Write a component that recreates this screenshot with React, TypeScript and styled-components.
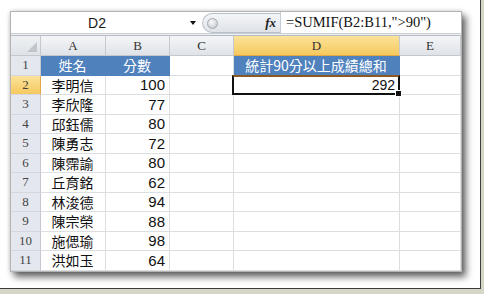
import React from "react";
import styled, { createGlobalStyle, css } from "styled-components";

const GlobalStyle = createGlobalStyle`
  html, body {
    margin: 0;
    padding: 0;
    background: #d6d6c8;
  }
`;

const CJK = `"Noto Sans CJK TC", "Noto Sans", sans-serif`;
const SERIF = `"Liberation Serif", "DejaVu Serif", serif`;
const SANS = `"Liberation Sans", Arial, sans-serif`;

const Page = styled.div`
  width: 481px;
  height: 289px;
  background: #ffffff;
  border-right: 1px solid #3e3e3a;
  border-bottom: 1px solid #3e3e3a;
  padding: 11px 0 0 10px;
  box-sizing: border-box;
  overflow: hidden;
`;

const Sheet = styled.div`
  width: 452px;
  background: #ffffff;
  border: 1px solid #b4b4b4;
  box-sizing: border-box;
  box-shadow: 4px 5px 7px rgba(0, 0, 0, 0.6), 0 0 4px rgba(0, 0, 0, 0.18);
`;

const FormulaBar = styled.div`
  display: flex;
  height: 21px;
  align-items: stretch;
`;

const NameBox = styled.div`
  width: 176px;
  display: flex;
  align-items: center;
  justify-content: center;
  padding-right: 4px;
  box-sizing: border-box;
  font-family: ${SANS};
  font-size: 14px;
  color: #1a1a1a;
`;

const DropArrow = styled.div`
  width: 12px;
  display: flex;
  align-items: center;
  justify-content: center;
  &::after {
    content: "";
    border-left: 3px solid transparent;
    border-right: 3px solid transparent;
    border-top: 4px solid #111;
  }
`;

const Grip = styled.div`
  width: 78px;
  margin: 1px 0 0 3px;
  display: flex;
  align-items: center;
  justify-content: space-between;
  padding: 0 4px 0 2px;
  box-sizing: border-box;
  background: linear-gradient(#f3f5f8, #dfe3e8);
  border: 1px solid #b9c0c9;
  border-right: none;
  border-radius: 10px 0 0 10px;
`;

const Knob = styled.span`
  width: 9px;
  height: 9px;
  border-radius: 50%;
  background: radial-gradient(circle at 40% 35%, #fafafa, #b9bec5);
  border: 1px solid #a6acb4;
  margin-left: 2px;
`;

const FxLabel = styled.span`
  font-family: ${SERIF};
  font-style: italic;
  font-weight: bold;
  font-size: 13px;
  color: #222;
`;

const FormulaInput = styled.div`
  flex: 1;
  display: flex;
  align-items: center;
  padding-left: 5px;
  border-left: 1px solid #c6ccd3;
  font-family: ${SERIF};
  font-size: 14.5px;
  color: #111;
`;

const Separator = styled.div`
  height: 3px;
  border-top: 1px solid #c9ced5;
  border-bottom: 1px solid #b5bbc4;
  background: #eef0f3;
  box-sizing: border-box;
`;

const Grid = styled.div`
  display: grid;
  grid-template-columns: 30px 65px 64px 64px 166px 61px;
  grid-template-rows: 20px repeat(11, 19.5px);
`;

const headBase = css`
  display: flex;
  align-items: center;
  justify-content: center;
  box-sizing: border-box;
  font-family: ${SERIF};
  font-size: 13px;
  color: #333;
  border-right: 1px solid #c5c9cf;
  border-bottom: 1px solid #c5c9cf;
`;

const Corner = styled.div`
  ${headBase};
  position: relative;
  background: linear-gradient(#eef0f3, #dfe3e8);
  &::after {
    content: "";
    position: absolute;
    right: 3px;
    bottom: 3px;
    border-left: 10px solid transparent;
    border-bottom: 10px solid #c2c6cc;
  }
`;

const ColHead = styled.div<{ $active?: boolean }>`
  ${headBase};
  background: ${(p) =>
    p.$active
      ? "linear-gradient(#fbe39a, #f5c95e)"
      : "linear-gradient(#f4f5f7, #dfe3e8)"};
  border-bottom-color: ${(p) => (p.$active ? "#e2a948" : "#c5c9cf")};
`;

const RowHead = styled.div<{ $active?: boolean }>`
  ${headBase};
  background: ${(p) =>
    p.$active ? "linear-gradient(#fbe39a, #f5c95e)" : "#e4e8ee"};
  border-right-color: ${(p) => (p.$active ? "#e2a948" : "#c5c9cf")};
  border-bottom-color: #d4d8de;
  color: #444;
`;

const Cell = styled.div<{
  $fill?: boolean;
  $align?: "left" | "center" | "right";
  $num?: boolean;
  $selected?: boolean;
}>`
  position: relative;
  display: flex;
  align-items: center;
  box-sizing: border-box;
  padding: 0 4px 0 3px;
  justify-content: ${(p) =>
    p.$align === "right" ? "flex-end" : p.$align === "center" ? "center" : "flex-start"};
  font-family: ${(p) => (p.$num ? SANS : CJK)};
  font-size: ${(p) => (p.$num ? "15px" : "14px")};
  color: ${(p) => (p.$fill ? "#ffffff" : "#111111")};
  background: ${(p) => (p.$fill ? "#4f81bd" : "#ffffff")};
  border-right: 1px solid ${(p) => (p.$fill ? "#4f81bd" : "#dcdfe2")};
  border-bottom: 1px solid ${(p) => (p.$fill ? "#4f81bd" : "#dcdfe2")};
  white-space: nowrap;

  ${(p) =>
    p.$selected &&
    css`
      font-size: 14px;
      &::after {
        content: "";
        position: absolute;
        left: -2px;
        top: -1px;
        right: -1px;
        bottom: -1px;
        border: 2px solid #111;
        border-top-color: #8b5a24;
      }
      &::before {
        content: "";
        position: absolute;
        right: -3px;
        bottom: -3px;
        width: 5px;
        height: 5px;
        background: #111;
        border: 1px solid #fff;
        z-index: 2;
      }
    `}
`;

const rows: [string, number][] = [
  ["李明信", 100],
  ["李欣隆", 77],
  ["邱鈺儒", 80],
  ["陳勇志", 72],
  ["陳霈諭", 80],
  ["丘育銘", 62],
  ["林浚德", 94],
  ["陳宗榮", 88],
  ["施偲瑜", 98],
  ["洪如玉", 64],
];

const App: React.FC = () => {
  return (
    <>
      <GlobalStyle />
      <Page>
        <Sheet>
          <FormulaBar>
            <NameBox>D2</NameBox>
            <DropArrow />
            <Grip>
              <Knob />
              <FxLabel>fx</FxLabel>
            </Grip>
            <FormulaInput>=SUMIF(B2:B11,"&gt;90")</FormulaInput>
          </FormulaBar>
          <Separator />
          <Grid>
            <Corner />
            <ColHead>A</ColHead>
            <ColHead>B</ColHead>
            <ColHead>C</ColHead>
            <ColHead $active>D</ColHead>
            <ColHead>E</ColHead>

            <RowHead>1</RowHead>
            <Cell $fill $align="center">姓名</Cell>
            <Cell $fill $align="center">分數</Cell>
            <Cell />
            <Cell $fill $align="center">統計90分以上成績總和</Cell>
            <Cell />

            {rows.map(([name, score], i) => (
              <React.Fragment key={name}>
                <RowHead $active={i === 0}>{i + 2}</RowHead>
                <Cell $align="center">{name}</Cell>
                <Cell $align="right" $num>{score}</Cell>
                <Cell />
                {i === 0 ? (
                  <Cell $align="right" $num $selected>292</Cell>
                ) : (
                  <Cell />
                )}
                <Cell />
              </React.Fragment>
            ))}
          </Grid>
        </Sheet>
      </Page>
    </>
  );
};

export default App;
